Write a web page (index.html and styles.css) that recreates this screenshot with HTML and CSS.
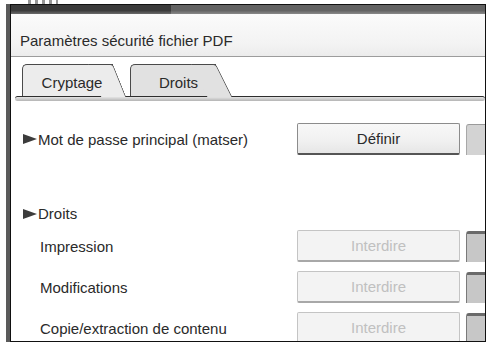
FILE: index.html
```html
<!DOCTYPE html>
<html lang="fr">
<head>
<meta charset="utf-8">
<title>Paramètres sécurité fichier PDF</title>
<link rel="stylesheet" href="styles.css">
</head>
<body>
<div class="stub"></div>
<div class="outer">
  <div class="frame">
    <div class="topbar"></div>
    <div class="titlebar">Paramètres sécurité fichier PDF</div>
    <div class="tabs">
      <div class="tab tab-crypt"><span>Cryptage</span></div>
      <div class="tab tab-droits"><span>Droits</span></div>
    </div>
    <div class="tabbar"></div>
    <div class="content">
      <div class="row row-first">
        <div class="label"><i class="tri"></i>Mot de passe principal (matser)</div>
        <div class="btn">Définir</div>
        <div class="btn-part light"></div>
      </div>
      <div class="section"><i class="tri"></i>Droits</div>
      <div class="row">
        <div class="label sub">Impression</div>
        <div class="btn disabled">Interdire</div>
        <div class="btn-part"></div>
      </div>
      <div class="row">
        <div class="label sub">Modifications</div>
        <div class="btn disabled">Interdire</div>
        <div class="btn-part"></div>
      </div>
      <div class="row">
        <div class="label sub">Copie/extraction de contenu</div>
        <div class="btn disabled">Interdire</div>
        <div class="btn-part"></div>
      </div>
    </div>
  </div>
</div>
</body>
</html>
```
FILE: styles.css
```css
* { box-sizing: border-box; }
html, body {
  margin: 0;
  padding: 0;
  width: 490px;
  height: 346px;
  overflow: hidden;
  background: #ffffff;
  font-family: "Liberation Sans", Arial, sans-serif;
  font-size: 15px;
  color: #2a2a2a;
}
.stub {
  height: 4px;
  width: 30px;
  margin-left: 28px;
  background: repeating-linear-gradient(90deg, #555 0 3px, transparent 3px 7px);
  opacity: 0.6;
}
.outer {
  margin-left: 6px;
  width: 480px;
  height: 338px;
  border-left: 4px solid #5a5a5a;
}
.frame {
  height: 100%;
  border: 1px solid #111;
  overflow: hidden;
  background: #fff;
}
.topbar {
  height: 9px;
  background:
    linear-gradient(180deg, rgba(255,255,255,0) 60%, rgba(255,255,255,0.25) 100%),
    linear-gradient(90deg, #3a3a3a 0 160px, #626262 160px);
}
.titlebar {
  height: 43px;
  padding: 18px 0 0 9px;
  line-height: 17px;
  background: linear-gradient(180deg, #fbfbfb 0%, #f3f3f3 70%, #ececec 100%);
  border-bottom: 1px solid #9c9c9c;
  white-space: nowrap;
}
.tabs {
  display: flex;
  gap: 17px;
  padding-left: 11px;
  margin-top: 7px;
  height: 32px;
}
.tab {
  position: relative;
  height: 32px;
  border-top: 1px solid #4a4a4a;
  border-left: 1px solid #4a4a4a;
  border-top-left-radius: 5px;
  display: flex;
  align-items: center;
  justify-content: center;
  padding-top: 3px;
}
.tab span { position: relative; z-index: 1; }
.tab::after {
  content: "";
  position: absolute;
  top: -1px;
  right: 0;
  width: 24px;
  height: 32px;
  background: inherit;
  border-top: 1px solid #4a4a4a;
  border-right: 1px solid #4a4a4a;
  border-top-right-radius: 3px;
  transform-origin: top left;
}
.tab-crypt {
  width: 91px;
  background: #ececec;
  padding-left: 8px;
}
.tab-crypt::after { transform: skewX(22deg); }
.tab-droits {
  width: 86px;
  background: #e1e1e1;
  padding-left: 10px;
}
.tab-droits::after { transform: skewX(26.5deg); }
.tabbar {
  height: 5px;
  margin-left: 4px;
  border-top: 1px solid #2e2e2e;
  border-radius: 3px;
  background: linear-gradient(180deg, #e4e4e4, #b4b4b4);
}
.content {
  padding-top: 22px;
}
.row {
  display: grid;
  grid-template-columns: 280px 163px 1fr;
  column-gap: 6px;
  align-items: center;
  height: 32px;
  margin-bottom: 9px;
}
.label {
  display: flex;
  align-items: center;
  padding-left: 12px;
  line-height: 17px;
  white-space: nowrap;
}
.label.sub { padding-left: 29px; }
.tri {
  display: inline-block;
  width: 0;
  height: 0;
  border-left: 14px solid #3c3c3c;
  border-top: 5px solid transparent;
  border-bottom: 5px solid transparent;
  margin-right: 1px;
}
.section {
  display: flex;
  align-items: center;
  padding-left: 12px;
  line-height: 17px;
  margin-top: 50px;
  margin-bottom: 8px;
}
.btn {
  height: 32px;
  display: flex;
  align-items: center;
  justify-content: center;
  line-height: 17px;
  border: 1px solid #8c8c8c;
  border-bottom: 2px solid #555;
  border-radius: 2px;
  background: linear-gradient(180deg, #f8f8f8 0%, #f0f0f0 60%, #e6e6e6 100%);
  color: #2a2a2a;
}
.btn.disabled {
  border-color: #c4c4c4;
  border-bottom-color: #a8a8a8;
  background: #f3f3f3;
  color: #c0c0c0;
}
.btn-part {
  height: 31px;
  border-top: 3px solid #6a6a6a;
  border-left: 1px solid #7a7a7a;
  border-top-left-radius: 3px;
  background: #c7c7c7;
}
.btn-part.light {
  border-top: 1px solid #9a9a9a;
  border-left: 1px solid #a8a8a8;
  background: #d3d3d3;
}
```
